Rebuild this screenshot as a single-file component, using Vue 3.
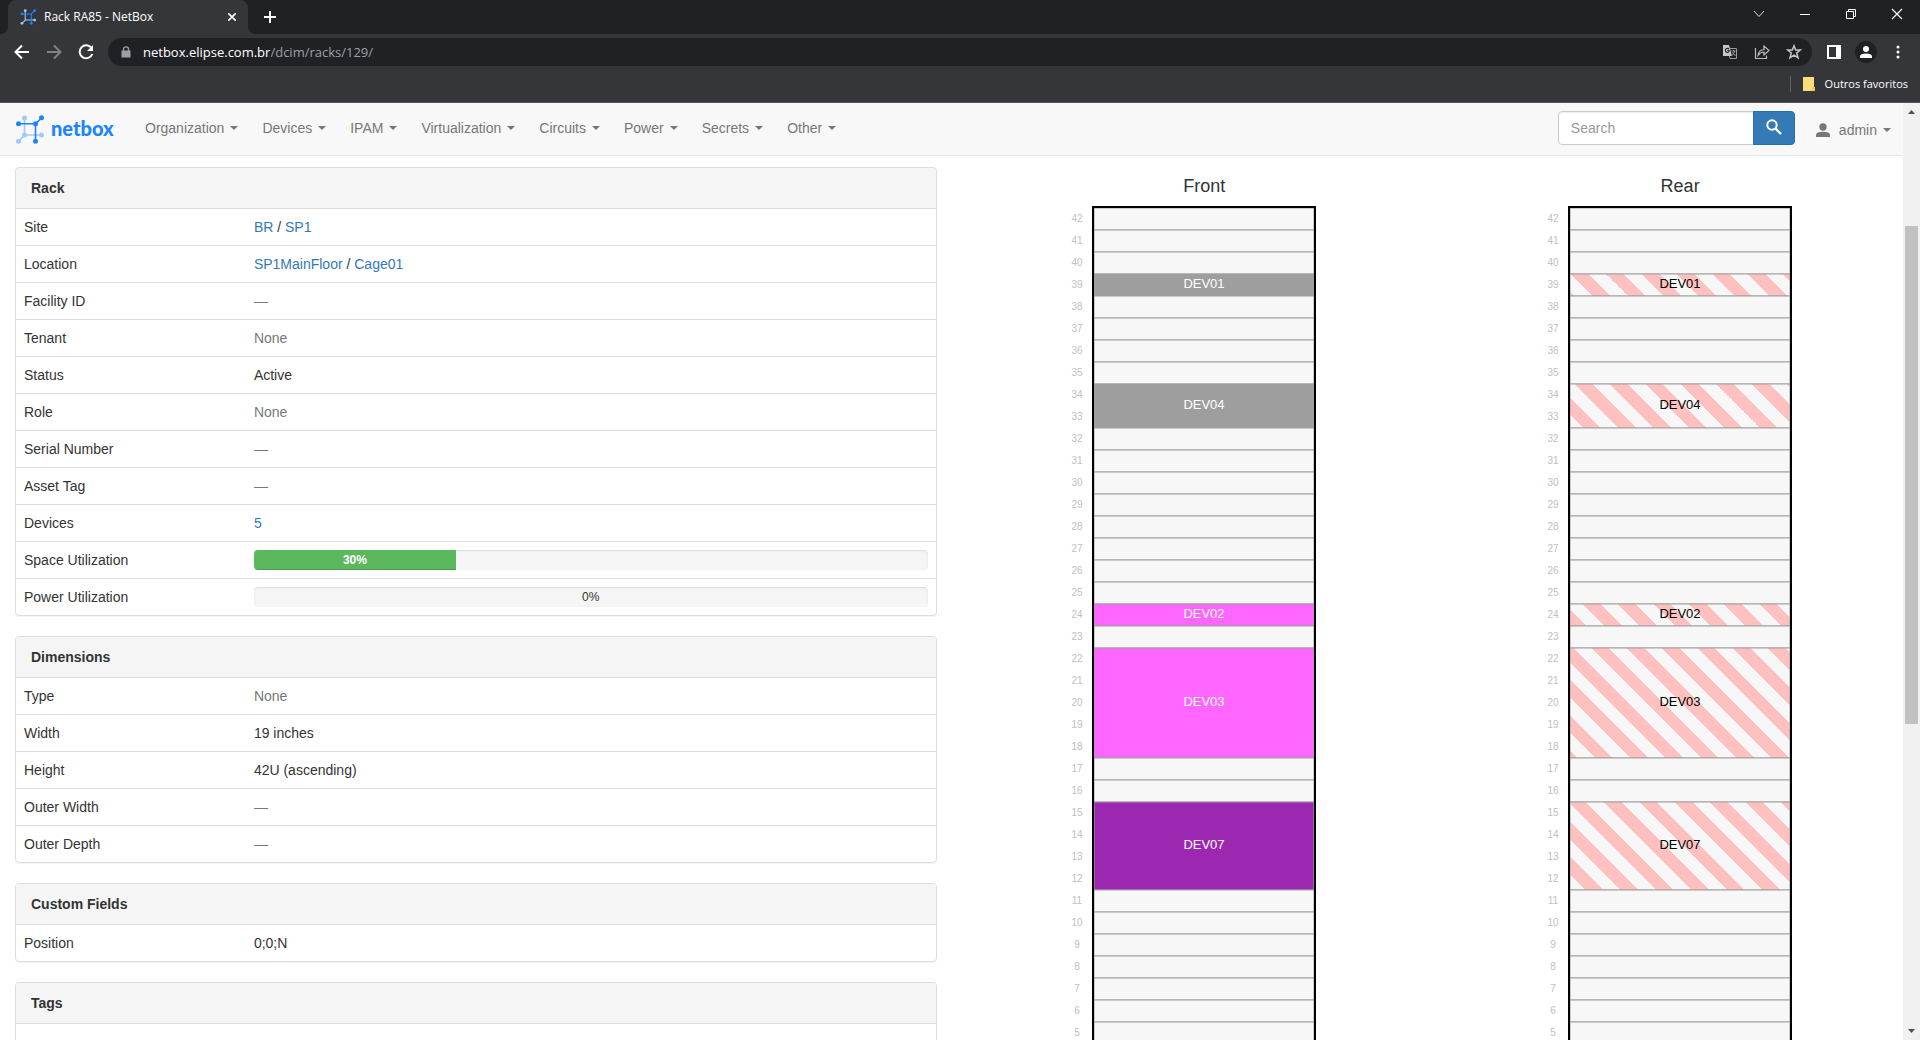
<script setup>
const menus = ['Organization', 'Devices', 'IPAM', 'Virtualization', 'Circuits', 'Power', 'Secrets', 'Other']

const panels = [
  {
    title: 'Rack',
    rows: [
      { label: 'Site', links: ['BR', 'SP1'] },
      { label: 'Location', links: ['SP1MainFloor', 'Cage01'] },
      { label: 'Facility ID', muted: '—' },
      { label: 'Tenant', muted: 'None' },
      { label: 'Status', text: 'Active' },
      { label: 'Role', muted: 'None' },
      { label: 'Serial Number', muted: '—' },
      { label: 'Asset Tag', muted: '—' },
      { label: 'Devices', links: ['5'] },
      { label: 'Space Utilization', percent: 30 },
      { label: 'Power Utilization', percent: 0 },
    ],
  },
  {
    title: 'Dimensions',
    rows: [
      { label: 'Type', muted: 'None' },
      { label: 'Width', text: '19 inches' },
      { label: 'Height', text: '42U (ascending)' },
      { label: 'Outer Width', muted: '—' },
      { label: 'Outer Depth', muted: '—' },
    ],
  },
  { title: 'Custom Fields', rows: [{ label: 'Position', text: '0;0;N' }] },
]

const TOP_U = 42
const LAST_U = 5
const UNIT = 22
const BORDER = 2

const devices = [
  { name: 'DEV01', top: 39, size: 1, color: '#9e9e9e' },
  { name: 'DEV04', top: 34, size: 2, color: '#9e9e9e' },
  { name: 'DEV02', top: 24, size: 1, color: '#ff66ff' },
  { name: 'DEV03', top: 22, size: 5, color: '#ff66ff' },
  { name: 'DEV07', top: 15, size: 4, color: '#9c27b0' },
]

const units = Array.from({ length: TOP_U - LAST_U + 1 }, (_, i) => ({ number: TOP_U - i, y: BORDER + i * UNIT }))

const slots = []
for (let u = TOP_U; u >= LAST_U;) {
  const device = devices.find((d) => d.top === u)
  const size = device ? device.size : 1
  slots.push({ unit: u, y: BORDER + (TOP_U - u) * UNIT, height: size * UNIT, device })
  u -= size
}

const faces = ['Front', 'Rear']
const fillOf = (slot, face) => {
  if (!slot.device) return '#f7f7f7'
  return face === 'Front' ? slot.device.color : 'url(#blocked-Rear)'
}
</script>

<template>
  <div class="window">
    <div class="tabstrip">
      <div class="tab">
        <svg class="favicon" viewBox="0 0 28 29">
          <g stroke="#9fcbf8" fill="#9fcbf8" stroke-width="2"><path d="M9 3V20H26M9 20 3 26" fill="none" /><circle cx="9" cy="3" r="2.5" stroke="none" /><circle cx="26" cy="20" r="2.5" stroke="none" /><circle cx="3" cy="26" r="2.5" stroke="none" /></g>
          <g stroke="#1d84ff" fill="#1d84ff" stroke-width="2"><path d="M3 9H20V26M20 9 26 3" fill="none" /><circle cx="3" cy="9" r="2.5" stroke="none" /><circle cx="20" cy="26" r="2.5" stroke="none" /><circle cx="26" cy="3" r="2.5" stroke="none" /></g>
        </svg>
        <span class="tab-title">Rack RA85 - NetBox</span>
        <button class="plain" aria-label="Close tab">
          <svg width="8" height="8" viewBox="0 0 8 8"><path d="M0 0 8 8M8 0 0 8" stroke="#fff" stroke-width="1.6" /></svg>
        </button>
      </div>
      <button class="plain new-tab" aria-label="New tab">
        <svg width="12" height="12" viewBox="0 0 12 12"><path d="M6 0V12M0 6H12" stroke="#fff" stroke-width="2" /></svg>
      </button>
      <div class="window-buttons">
        <button class="plain" aria-label="Search tabs"><svg width="12" height="12" viewBox="0 0 12 12"><path d="M1 3 6 8.500 11 3" fill="none" stroke="#ddd" /></svg></button>
        <button class="plain" aria-label="Minimize"><svg width="12" height="12" viewBox="0 0 12 12"><path d="M1 6.500H11" stroke="#fff" /></svg></button>
        <button class="plain" aria-label="Restore"><svg width="12" height="12" viewBox="0 0 12 12"><path d="M1.500 3.500H8.500V10.500H1.500ZM3.500 3.500V1.500H10.500V8.500H8.500" fill="none" stroke="#fff" /></svg></button>
        <button class="plain" aria-label="Close"><svg width="12" height="12" viewBox="0 0 12 12"><path d="M1 1 11 11M11 1 1 11" stroke="#fff" stroke-width="1.200" /></svg></button>
      </div>
    </div>

    <div class="toolbar">
      <div class="history">
        <button class="plain" aria-label="Back"><svg width="16" height="16" viewBox="0 0 16 16"><path d="M15 8H2M8 1.500 1.500 8 8 14.500" fill="none" stroke="#fff" stroke-width="2" /></svg></button>
        <button class="plain" aria-label="Forward"><svg width="16" height="16" viewBox="0 0 16 16"><path d="M1 8H14M8 1.500 14.500 8 8 14.500" fill="none" stroke="#818286" stroke-width="2" /></svg></button>
        <button class="plain" aria-label="Reload"><svg width="16" height="16" viewBox="0 0 16 16"><path d="M13.500 4A6.500 6.500 0 1 0 14.300 10" fill="none" stroke="#fff" stroke-width="2" /><path d="M15 1V7H9Z" fill="#fff" /></svg></button>
      </div>
      <div class="omnibox">
        <svg width="10" height="12" viewBox="0 0 10 12"><path d="M1 4.500H9Q9.500 4.500 9.500 5V11.500H.5V5Q.5 4.500 1 4.500Z" fill="#9aa0a6" /><path d="M2.500 5V3A2.500 2.200 0 0 1 7.500 3V5" fill="none" stroke="#9aa0a6" stroke-width="1.300" /></svg>
        <span class="url"><span class="host">netbox.elipse.com.br</span>/dcim/racks/129/</span>
        <button class="plain" aria-label="Translate"><svg width="16" height="16" viewBox="0 0 16 16"><path d="M6 4.500H14.500V14.500H8Z" fill="none" stroke="#9a9b9e" /><path d="M1 1H7L10 12H1Z" fill="#c4c5c8" /><path d="M7 5.200A2 2 0 1 0 7 7.500V6.500H5.400" fill="none" stroke="#202124" stroke-width="1.100" /><path d="M9.500 7H13.500M11.500 6V7M12.800 7Q12 10 10 11.500M10.500 8.500 13.500 12" fill="none" stroke="#9a9b9e" /></svg></button>
        <button class="plain" aria-label="Share"><svg width="16" height="16" viewBox="0 0 16 16"><path d="M1.500 4V14.500H12.500V11.500M4 11.500Q4.500 6 10 5.500V2L15 6.500 10 11V8Q6.500 8 4 11.500Z" fill="none" stroke="#bdbec1" stroke-width="1.200" /></svg></button>
        <button class="plain" aria-label="Bookmark"><svg width="16" height="16" viewBox="0 0 16 16"><path d="M8 1.800 9.700 6H14.300L10.700 9 12 13.800 8 11.100 4 13.800 5.300 9 1.700 6H6.300Z" fill="none" stroke="#c4c5c8" stroke-width="1.500" /></svg></button>
      </div>
      <div class="tools">
        <button class="plain" aria-label="Side panel"><svg width="14" height="14" viewBox="0 0 14 14"><path fill-rule="evenodd" d="M0 0H14V14H0ZM2 2V12H9V2Z" fill="#fff" /></svg></button>
        <button class="plain avatar" aria-label="Profile"><svg width="14" height="14" viewBox="0 0 14 14"><circle cx="7" cy="4" r="3" fill="#fff" /><path d="M1 13V11.500Q1 8.500 7 8.500T13 11.500V13Z" fill="#fff" /></svg></button>
        <button class="plain" aria-label="Menu"><svg width="4" height="14" viewBox="0 0 4 14"><g fill="#fff"><circle cx="2" cy="2" r="1.500" /><circle cx="2" cy="7" r="1.500" /><circle cx="2" cy="12" r="1.500" /></g></svg></button>
      </div>
    </div>

    <div class="bookmarks">
      <span class="divider"></span>
      <svg width="12" height="14" viewBox="0 0 12 14"><path d="M0 0H11V10H12V14H0Z" fill="#fddc7c" /><path d="M9 10H12V14H9Z" fill="#f3c74f" /></svg>
      <a href="#">Outros favoritos</a>
    </div>

    <div class="viewport">
      <div class="page">
        <nav class="navbar">
          <a class="brand" href="#">
            <svg width="28" height="29" viewBox="0 0 28 29">
              <g stroke="#9fcbf8" fill="#9fcbf8" stroke-width="1.600"><path d="M8.500 3V20H25.500M8.500 20 3 26" fill="none" /><circle cx="8.500" cy="3" r="2.500" stroke="none" /><circle cx="8.500" cy="20" r="2.500" stroke="none" /><circle cx="25.500" cy="20" r="2.500" stroke="none" /><circle cx="2.500" cy="26.200" r="2.500" stroke="none" /></g>
              <g stroke="#1d84ff" fill="#1d84ff" stroke-width="1.600"><path d="M2.500 8.800H19.500V26M19.500 8.800 25.500 3" fill="none" /><circle cx="2.500" cy="8.800" r="2.500" stroke="none" /><circle cx="19.500" cy="8.800" r="2.500" stroke="none" /><circle cx="19.500" cy="26.200" r="2.500" stroke="none" /><circle cx="25.500" cy="2.700" r="2.500" stroke="none" /></g>
            </svg>
            <span>netbox</span>
          </a>
          <ul class="menus">
            <li v-for="menu in menus" :key="menu"><a href="#">{{ menu }}<i class="caret"></i></a></li>
          </ul>
          <form class="search" @submit.prevent>
            <input type="text" placeholder="Search" aria-label="Search">
            <button aria-label="Search"><svg width="16" height="16" viewBox="0 0 16 16"><circle cx="6" cy="6" r="4.700" fill="none" stroke="#fff" stroke-width="2" /><path d="M9.500 9.500 15 15" stroke="#fff" stroke-width="2.400" /></svg></button>
          </form>
          <a class="user" href="#">
            <svg width="14" height="14" viewBox="0 0 14 14"><circle cx="7" cy="4" r="3.700" fill="#777" /><path d="M0 14V12Q0 8.800 7 8.800T14 12V14Z" fill="#777" /></svg>
            <span>admin</span><i class="caret"></i>
          </a>
        </nav>

        <main class="content">
          <div class="details">
            <section v-for="panel in panels" :key="panel.title" class="panel">
              <h2>{{ panel.title }}</h2>
              <table>
                <tbody>
                  <tr v-for="row in panel.rows" :key="row.label">
                    <th scope="row">{{ row.label }}</th>
                    <td>
                      <template v-if="row.links">
                        <template v-for="(link, i) in row.links" :key="link"><template v-if="i"> / </template><a href="#">{{ link }}</a></template>
                      </template>
                      <span v-else-if="row.muted" class="muted">{{ row.muted }}</span>
                      <div v-else-if="row.percent !== undefined" class="progress">
                        <div v-if="row.percent" class="bar" :style="{ width: row.percent + '%' }">{{ row.percent }}%</div>
                        <span v-else>0%</span>
                      </div>
                      <template v-else>{{ row.text }}</template>
                    </td>
                  </tr>
                </tbody>
              </table>
            </section>
            <section class="panel">
              <h2>Tags</h2>
              <div class="panel-body"></div>
            </section>
          </div>

          <div class="elevations">
            <section v-for="face in faces" :key="face" class="elevation">
              <h4>{{ face }}</h4>
              <svg width="254" height="838" viewBox="0 0 254 838">
                <defs>
                  <linearGradient :id="'blocked-' + face" gradientUnits="userSpaceOnUse" x1="0" y1="0" x2="0" y2="25" spreadMethod="repeat" gradientTransform="rotate(45)">
                    <stop offset="0" stop-color="#f7f7f7" />
                    <stop offset=".5" stop-color="#f7f7f7" />
                    <stop offset=".5" stop-color="#ffc0c0" />
                    <stop offset="1" stop-color="#ffc0c0" />
                  </linearGradient>
                </defs>
                <text v-for="unit in units" :key="unit.number" class="unit" x="15" :y="unit.y + 11">{{ unit.number }}</text>
                <rect v-for="slot in slots" :key="slot.unit" class="slot" x="32" :y="slot.y" width="220" :height="slot.height" :fill="fillOf(slot, face)" />
                <template v-for="slot in slots" :key="slot.unit">
                  <text v-if="slot.device" class="device" x="142" :y="slot.y + slot.height / 2" :fill="face === 'Front' ? '#fff' : '#000'">{{ slot.device.name }}</text>
                </template>
                <rect class="frame" x="31" y="1" width="222" height="926" />
              </svg>
            </section>
          </div>
        </main>
      </div>
      <div class="scrollbar" aria-hidden="true">
        <svg width="17" height="17" viewBox="0 0 17 17"><path d="M5 11 8.500 7 12 11Z" fill="#505050" /></svg>
        <div class="track"><div class="thumb"></div></div>
        <svg width="17" height="17" viewBox="0 0 17 17"><path d="M5 6 8.500 10 12 6Z" fill="#505050" /></svg>
      </div>
    </div>
  </div>
</template>

<style>
body {
  margin: 0;
}
</style>

<style scoped>
* {
  box-sizing: border-box;
}
.window {
  display: flex;
  flex-direction: column;
  height: 100vh;
  overflow: hidden;
  font: 14px/20px "Liberation Sans", Arial, sans-serif;
  color: #333;
}
a {
  color: #337ab7;
  text-decoration: none;
}
.plain {
  display: flex;
  align-items: center;
  justify-content: center;
  padding: 0;
  border: 0;
  background: none;
}
.tabstrip {
  display: flex;
  flex: none;
  align-items: center;
  height: 34px;
  background: #202124;
  font: 12px/16px "Open Sans", sans-serif;
  color: #fff;
}
.tab {
  display: flex;
  align-items: center;
  align-self: stretch;
  width: 240px;
  padding: 0 12px;
  border-radius: 8px 8px 0 0;
  background: #35363a;
}
/* the tab's flared feet */
.tabstrip::before,
.tab + .new-tab::before {
  align-self: flex-end;
  width: 8px;
  height: 8px;
  background: radial-gradient(circle at 0 0, #202124 8px, #35363a 8px);
  content: "";
}
.tab + .new-tab::before {
  margin-right: auto;
  background: radial-gradient(circle at 100% 0, #202124 8px, #35363a 8px);
}
.favicon {
  width: 16px;
  height: 16px;
  margin-right: 8px;
}
.tab-title {
  flex: 1;
}
.new-tab {
  align-self: stretch;
  width: 28px;
}
.window-buttons {
  display: flex;
  margin-left: auto;
  padding-bottom: 6px;
}
.window-buttons button {
  width: 46px;
}
.toolbar {
  display: flex;
  flex: none;
  align-items: center;
  height: 36px;
  background: #35363a;
}
.history {
  display: flex;
  gap: 16px;
  padding: 0 14px;
}
.omnibox {
  display: flex;
  flex: 1;
  align-items: center;
  gap: 16px;
  height: 28px;
  padding: 0 10px 0 13px;
  border-radius: 14px;
  background: #202124;
}
.url {
  flex: 1;
  margin-left: -4px;
  font: 13px/20px "Open Sans", sans-serif;
  color: #9aa0a6;
}
.host {
  color: #fff;
}
.tools {
  display: flex;
  align-items: center;
  gap: 14px;
  padding: 0 20px 0 15px;
}
.avatar {
  width: 22px;
  height: 22px;
  border-radius: 50%;
  background: #202124;
}
.tools button:last-child {
  margin-left: 5px;
}
.bookmarks {
  display: flex;
  flex: none;
  align-items: center;
  justify-content: flex-end;
  height: 33px;
  padding: 0 12px 4px 0;
  border-bottom: 1px solid #57585c;
  background: #35363a;
}
.bookmarks a {
  margin-left: 10px;
  font: 11px/16px "Open Sans", sans-serif;
  color: #fff;
}
.divider {
  width: 1px;
  height: 16px;
  margin-right: 12px;
  background: #5f6368;
}
.viewport {
  display: flex;
  flex: 1;
  min-height: 0;
}
.page {
  flex: 1;
  overflow: hidden;
  background: #fff;
}
.navbar {
  display: flex;
  align-items: flex-start;
  height: 53px;
  padding: 8px 12px 0 16px;
  border-bottom: 1px solid #e7e7e7;
  background: #f8f8f8;
}
.brand {
  display: flex;
  align-items: center;
  gap: 7px;
  width: 117px;
  height: 36px;
  font: 900 20px/26px Lato, sans-serif;
  color: #1d84ff;
}
.brand span {
  padding-bottom: 2px;
}
.menus {
  display: flex;
  flex: 1;
  margin: 0;
  padding: 0;
  list-style: none;
}
.menus a {
  display: flex;
  align-items: center;
  height: 34px;
  padding: 0 12px;
  color: #777;
}
.caret {
  margin-left: 6px;
  border: 4px solid transparent;
  border-top-color: #777;
  border-bottom: 0;
}
.search {
  display: flex;
}
.search input {
  width: 196px;
  height: 34px;
  padding: 6px 12px;
  border: 1px solid #ccc;
  border-radius: 4px 0 0 4px;
  background: #fff;
  box-shadow: inset 0 1px 1px rgba(0, 0, 0, 0.075);
  font: 14px/20px "Liberation Sans", Arial, sans-serif;
}
.search input::placeholder {
  color: #999;
}
.search button {
  width: 42px;
  height: 34px;
  margin-left: -1px;
  padding: 0;
  border: 1px solid #2e6da4;
  border-radius: 0 4px 4px 0;
  background: #337ab7;
}
.user {
  display: flex;
  align-items: center;
  height: 38px;
  margin-left: 21px;
  color: #777;
}
.user span {
  margin-left: 9px;
}
.content {
  display: flex;
  padding-top: 11px;
}
.details {
  flex: none;
  width: 50%;
  padding: 0 15px;
}
.panel {
  margin-bottom: 20px;
  border: 1px solid #ddd;
  border-radius: 4px;
  box-shadow: 0 1px 1px rgba(0, 0, 0, 0.05);
}
.panel h2 {
  margin: 0;
  padding: 10px 15px;
  border-bottom: 1px solid #ddd;
  border-radius: 3px 3px 0 0;
  background: #f5f5f5;
  font-size: 14px;
  line-height: 20px;
}
.panel-body {
  height: 50px;
}
table {
  width: 100%;
  border-spacing: 0;
}
th,
td {
  padding: 8px;
  border-top: 1px solid #ddd;
  font-weight: normal;
  text-align: left;
}
th {
  width: 25%;
}
tr:first-child > * {
  border-top: 0;
}
.muted {
  color: #777;
}
.progress {
  height: 20px;
  overflow: hidden;
  border-radius: 4px;
  background: #f5f5f5;
  box-shadow: inset 0 1px 2px rgba(0, 0, 0, 0.1);
  font-size: 12px;
  text-align: center;
}
.bar {
  background: #5cb85c;
  box-shadow: inset 0 -1px 0 rgba(0, 0, 0, 0.15);
  font-weight: bold;
  color: #fff;
}
.progress span {
  display: block;
}
.elevations {
  display: flex;
  flex: none;
  width: 50%;
}
.elevation {
  display: flex;
  flex: 1;
  flex-direction: column;
  align-items: center;
}
h4 {
  margin: 9px 0 10px;
  padding-left: 30px;
  font-size: 18px;
  font-weight: normal;
  line-height: 20px;
}
.elevation text {
  text-anchor: middle;
  dominant-baseline: middle;
}
.unit {
  fill: #c0c0c0;
  font-size: 10px;
}
.device {
  font-size: 13px;
}
.slot {
  stroke: #a0a0a0;
}
.frame {
  fill: none;
  stroke: #000;
  stroke-width: 2px;
}
.scrollbar {
  display: flex;
  flex: none;
  flex-direction: column;
  width: 17px;
  background: #f1f1f1;
}
.track {
  flex: 1;
  display: flex;
  flex-direction: column;
  padding: 106px 2px 0;
}
.track::after {
  flex: 3;
  content: "";
}
.thumb {
  flex: 5;
  background: #c1c1c1;
}
</style>
